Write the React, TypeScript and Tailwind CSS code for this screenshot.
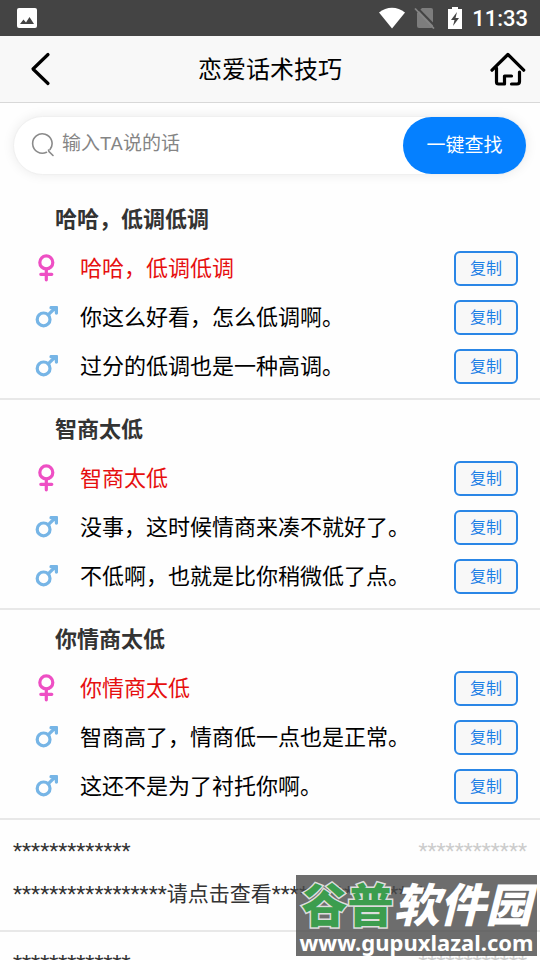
import React, { useState } from 'react';

interface Topic {
  title: string;
  ask: string;
  replies: string[];
}

const topics: Topic[] = [
  {
    title: '哈哈，低调低调',
    ask: '哈哈，低调低调',
    replies: ['你这么好看，怎么低调啊。', '过分的低调也是一种高调。'],
  },
  {
    title: '智商太低',
    ask: '智商太低',
    replies: ['没事，这时候情商来凑不就好了。', '不低啊，也就是比你稍微低了点。'],
  },
  {
    title: '你情商太低',
    ask: '你情商太低',
    replies: ['智商高了，情商低一点也是正常。', '这还不是为了衬托你啊。'],
  },
];

const lockedItems = [1, 2];

const FemaleIcon: React.FC = () => (
  <svg width="24" height="32" viewBox="0 -2 24 32" fill="none" stroke="#ee4fc4" strokeWidth="3.2" strokeLinecap="round">
    <circle cx="12.3" cy="7.4" r="6.5" />
    <path d="M12.3 14V24.800M6.800 19.300h11" />
  </svg>
);

const MaleIcon: React.FC = () => (
  <svg width="24" height="32" viewBox="0 -2 24 32" fill="none" stroke="#76b5e6" strokeWidth="3.2">
    <circle cx="9.6" cy="15.4" r="6.4" />
    <path d="M14.200 10.800L20.500 4.500" />
    <path d="M16 2.300H23.800V10L21.500 8 17.500 4.300z" fill="#76b5e6" stroke="none" />
    <path d="M17 3.700h5.400v5.400" strokeLinecap="round" strokeLinejoin="round" />
  </svg>
);

const StatusBar: React.FC = () => (
  <div className="flex h-9 shrink-0 items-center justify-between bg-[#444444] pr-3 pl-4 text-white">
    <svg width="22" height="22" viewBox="0 0 22 22">
      <rect x="1" y="1" width="20" height="20" rx="2" fill="#fff" />
      <path d="M4 17l3.500-4.500 2.500 3 3.500-5.500 4.500 7z" fill="#444" />
    </svg>
    <div className="flex items-center">
      <svg className="mr-2" width="28" height="22" viewBox="0 0 28 22">
        <path d="M1 5.500C8.500-.8 19.500-.8 27 5.500L14 21.500z" fill="#fff" />
      </svg>
      <svg className="mr-3" width="22" height="22" viewBox="0 0 22 22">
        <path d="M8 1h9a2 2 0 0 1 2 2v16a2 2 0 0 1-2 2H5a2 2 0 0 1-2-2V6z" fill="#7d7d7d" />
        <path d="M3 .5L22 20" stroke="#444" strokeWidth="2" />
        <path d="M1 1.500L20 21.500" stroke="#858585" strokeWidth="1.800" />
      </svg>
      <svg className="mr-2.5" width="14" height="22" viewBox="0 0 14 22">
        <path d="M4 0h6v2h4v20H0V2h4z" fill="#fff" />
        <path d="M9 5L3 13h3.500L5 19l6-8H7.500z" fill="#444" />
      </svg>
      <span className="pt-0.5 text-[22px] leading-7 font-medium">11:33</span>
    </div>
  </div>
);

const Header: React.FC = () => (
  <header className="flex h-[67px] shrink-0 items-center justify-between border-b border-[#d8d8d8] bg-[#f8f8f8] px-3 text-black">
    <button type="button" aria-label="返回" className="pr-1 pl-4">
      <svg width="24" height="36" viewBox="0 0 24 36" fill="none" stroke="#000" strokeWidth="3.2" strokeLinecap="round" strokeLinejoin="round">
        <path d="M20 3.500L5 18l15 14.500" />
      </svg>
    </button>
    <h1 className="pt-0.5 text-2xl">恋爱话术技巧</h1>
    <a href="#home" aria-label="首页" className="pl-1">
      <svg width="40" height="36" viewBox="-2 0 40 36" fill="none" stroke="#000" strokeWidth="3.2" strokeLinecap="round" strokeLinejoin="round">
        <path d="M2 19.200L17.900 3.500 33.700 19.200" />
        <path d="M6.500 17V31q0 2 2 2H14.500V25H21.500" />
        <path d="M29.500 21V30.500q0 2.500-2.500 2.500H21.500" />
      </svg>
    </a>
  </header>
);

const SearchBar: React.FC = () => {
  const [keyword, setKeyword] = useState('');

  return (
    <form
      onSubmit={(e) => e.preventDefault()}
      className="mx-[13px] mt-[13px] flex h-[59px] items-center rounded-full border border-[#f0f0f0] bg-white shadow-[0_0_12px_rgba(0,0,0,0.08)]"
    >
      <svg className="mb-0.5 ml-4 shrink-0" width="26" height="26" viewBox="0 0 26 26" fill="none" stroke="#8a8a8a" strokeWidth="1.600" strokeLinecap="round">
        <path d="M16.500 20.300A9.700 9.700 0 1 1 20 17.500" />
        <path d="M18.500 18l.5 1.500 4 4" />
      </svg>
      <input
        type="text"
        aria-label="输入TA说的话"
        placeholder="输入TA说的话"
        value={keyword}
        onChange={(e) => setKeyword(e.target.value)}
        className="mb-1 min-w-0 flex-1 pl-1.5 text-[19px] leading-7 outline-none placeholder:text-[#858585]"
      />
      <button type="submit" className="h-full w-[123px] shrink-0 rounded-full bg-[#0580ff] pt-0.5 text-[19px] text-white">
        一键查找
      </button>
    </form>
  );
};

interface LineProps {
  text: string;
  female?: boolean;
}

const Line: React.FC<LineProps> = ({ text, female }) => (
  <li className="flex items-center">
    {female ? <FemaleIcon /> : <MaleIcon />}
    <span className={female ? 'flex-1 pl-[22px] text-[#e60f0f]' : 'flex-1 pl-[22px] text-black'}>{text}</span>
    <button
      type="button"
      onClick={() => navigator.clipboard?.writeText(text)}
      className="h-[35px] w-16 rounded-md border-2 border-[#2a86e6] bg-[#f8f8f8] text-base text-[#1c7fe6]"
    >
      复制
    </button>
  </li>
);

const TopicCard: React.FC<{ topic: Topic }> = ({ topic }) => (
  <section className="border-b-2 border-[#e8e8e8] pt-3.5 pr-[22px] pb-3.5 pl-[34px] text-[22px] leading-8">
    <h2 className="pl-[21px] font-bold text-[#333333]">{topic.title}</h2>
    <ul className="mt-[15px] flex flex-col gap-[14px]">
      <Line text={topic.ask} female />
      {topic.replies.map((reply) => (
        <Line key={reply} text={reply} />
      ))}
    </ul>
  </section>
);

const LockedCard: React.FC = () => (
  <section className="border-b-2 border-[#e8e8e8] px-[13px] pt-[15px] pb-5 text-[21px] leading-8 text-[#333333]">
    <div className="flex justify-between">
      <span>*************</span>
      <span className="text-[#cccccc]">************</span>
    </div>
    <p className="mt-[11px] whitespace-nowrap">*****************请点击查看*****************</p>
  </section>
);

const Watermark: React.FC = () => (
  <div className="pointer-events-none absolute right-[3px] bottom-1 flex h-[81px] w-[241px] flex-col items-center justify-end overflow-hidden bg-[#484848]/80 whitespace-nowrap text-white">
    <div className="flex text-[46px] leading-[44px] font-black">
      <span className="text-[#3c9d4e] [-webkit-text-stroke:3px_#dddddd] [paint-order:stroke_fill]">谷普</span>
      <span className="italic">软件园</span>
    </div>
    <div className="font-['Noto_Sans','Open_Sans',sans-serif] text-[22px] leading-7 font-bold">www.gupuxlazal.com</div>
  </div>
);

const App: React.FC = () => {
  return (
    <div className="relative flex h-screen flex-col overflow-hidden bg-[#fefefe] font-[Roboto,'Noto_Sans_CJK_SC',sans-serif]">
      <StatusBar />
      <Header />
      <main className="min-h-0 flex-1 overflow-y-auto [scrollbar-width:none]">
        <SearchBar />
        <div className="pt-[15px]">
          {topics.map((topic) => (
            <TopicCard key={topic.title} topic={topic} />
          ))}
          {lockedItems.map((id) => (
            <LockedCard key={id} />
          ))}
        </div>
      </main>
      <Watermark />
    </div>
  );
};

export default App;
